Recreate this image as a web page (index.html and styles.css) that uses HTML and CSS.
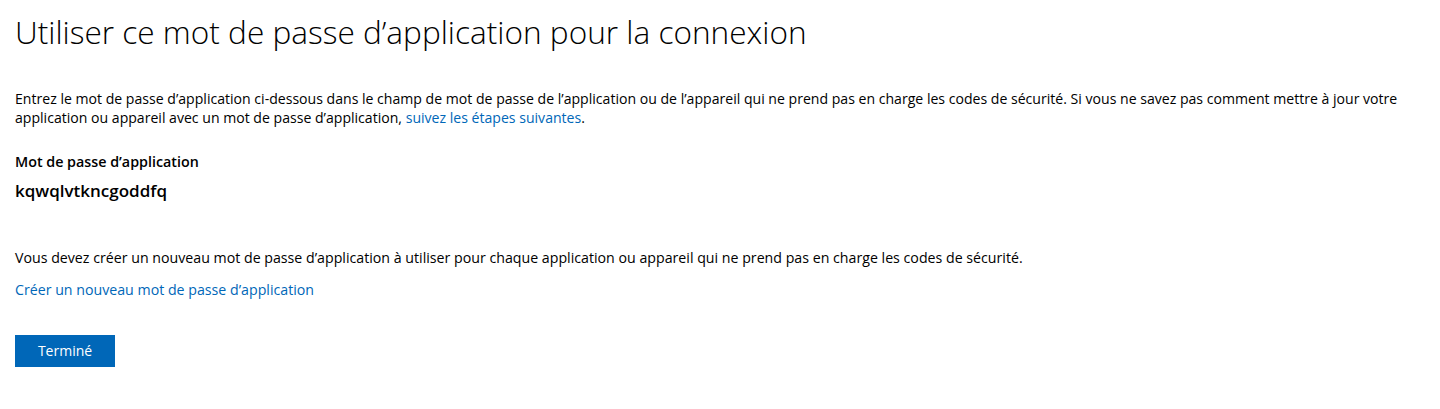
FILE: index.html
```html
<!DOCTYPE html>
<html lang="fr">
<head>
<meta charset="utf-8">
<title>Mot de passe d’application</title>
<link rel="stylesheet" href="styles.css">
</head>
<body>
<main class="page">
  <h1 class="title">Utiliser ce mot de passe d’application pour la connexion</h1>
  <p class="intro">Entrez le mot de passe d’application ci-dessous dans le champ de mot de passe de l’application ou de l’appareil qui ne prend pas en charge les codes de sécurité. Si vous ne savez pas comment mettre à jour votre application ou appareil avec un mot de passe d’application, <a class="link" href="#">suivez les étapes suivantes</a>.</p>
  <div class="field">
    <div class="label">Mot de passe d’application</div>
    <div class="password">kqwqlvtkncgoddfq</div>
  </div>
  <p class="note">Vous devez créer un nouveau mot de passe d’application à utiliser pour chaque application ou appareil qui ne prend pas en charge les codes de sécurité.</p>
  <a class="link create" href="#">Créer un nouveau mot de passe d’application</a>
  <div class="actions">
    <button class="btn" type="button">Terminé</button>
  </div>
</main>
</body>
</html>
```

FILE: styles.css
```css
html, body {
  margin: 0;
  padding: 0;
  background: #ffffff;
}

body {
  font-family: "Open Sans", "Noto Sans", "Liberation Sans", sans-serif;
  color: #000000;
  font-size: 14px;
}

.page {
  padding: 12px 15px 0 15px;
  width: 1400px;
  display: flex;
  flex-direction: column;
  align-items: flex-start;
}

.title {
  margin: 0;
  font-weight: 300;
  font-size: 31.6px;
  line-height: 40px;
  color: #000;
}

.intro {
  margin: 37px 0 0 0;
  font-size: 14.08px;
  line-height: 19.4px;
}

.link {
  color: #0067b8;
  text-decoration: none;
}

.field {
  display: flex;
  flex-direction: column;
  margin-top: 24px;
}

.label {
  font-weight: 600;
  font-size: 14.3px;
  line-height: 20px;
}

.password {
  font-weight: 600;
  font-size: 17px;
  line-height: 24px;
  margin-top: 7px;
}

.note {
  margin: 45px 0 0 0;
  font-size: 14.2px;
  line-height: 19.4px;
}

.create {
  margin-top: 13px;
  font-size: 14.2px;
  line-height: 19.4px;
}

.actions {
  margin-top: 35px;
}

.btn {
  width: 100px;
  height: 32px;
  border: none;
  background: #0067b8;
  color: #ffffff;
  font-family: inherit;
  font-size: 14px;
  padding: 0;
  cursor: pointer;
}
```
